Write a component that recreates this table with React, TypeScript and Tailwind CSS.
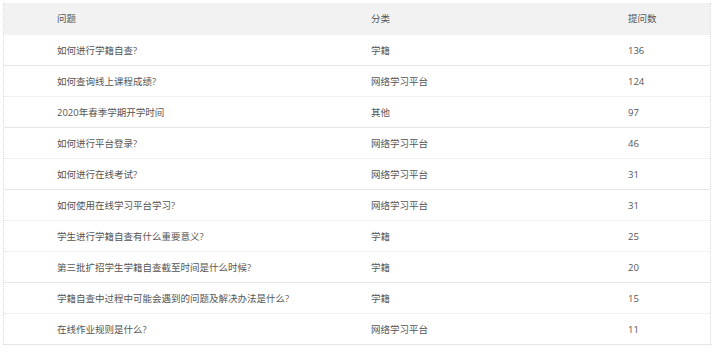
const rows = [
  { q: '如何进行学籍自查?', c: '学籍', n: 136, line: 'solid' },
  { q: '如何查询线上课程成绩?', c: '网络学习平台', n: 124, line: 'dotted' },
  { q: '2020年春季学期开学时间', c: '其他', n: 97, line: 'solid' },
  { q: '如何进行平台登录?', c: '网络学习平台', n: 46, line: 'dotted' },
  { q: '如何进行在线考试?', c: '网络学习平台', n: 31, line: 'solid' },
  { q: '如何使用在线学习平台学习?', c: '网络学习平台', n: 31, line: 'dotted' },
  { q: '学生进行学籍自查有什么重要意义?', c: '学籍', n: 25, line: 'dotted' },
  { q: '第三批扩招学生学籍自查截至时间是什么时候?', c: '学籍', n: 20, line: 'solid' },
  { q: '学籍自查中过程中可能会遇到的问题及解决办法是什么?', c: '学籍', n: 15, line: 'dotted' },
  { q: '在线作业规则是什么?', c: '网络学习平台', n: 11, line: 'solid' },
];

export default function App() {
  return (
    <div
      className="w-[716px] h-[353px] bg-white pt-[3px] pl-[3px] text-[9.5px] text-[#555]"
      style={{ fontFamily: '"Open Sans", "Noto Sans CJK SC", sans-serif' }}
    >
      <div className="w-[708px] border-x border-dotted border-[#d8d8d8]">
        {/* header */}
        <div className="grid grid-cols-[367px_257px_1fr] h-[32px] items-center bg-[#f2f2f2]">
          <div className="pl-[53px]">问题</div>
          <div>分类</div>
          <div>提问数</div>
        </div>
        {rows.map((r, i) => (
          <div
            key={i}
            className={`grid grid-cols-[367px_257px_1fr] h-[31px] items-center pt-[3px] border-b border-[#e6e6e6] ${
              r.line === 'dotted' ? 'border-dotted border-[#d4d4d4]' : 'border-solid'
            }`}
          >
            <div className="pl-[53px]">{r.q}</div>
            <div>{r.c}</div>
            <div>{r.n}</div>
          </div>
        ))}
      </div>
    </div>
  );
}
